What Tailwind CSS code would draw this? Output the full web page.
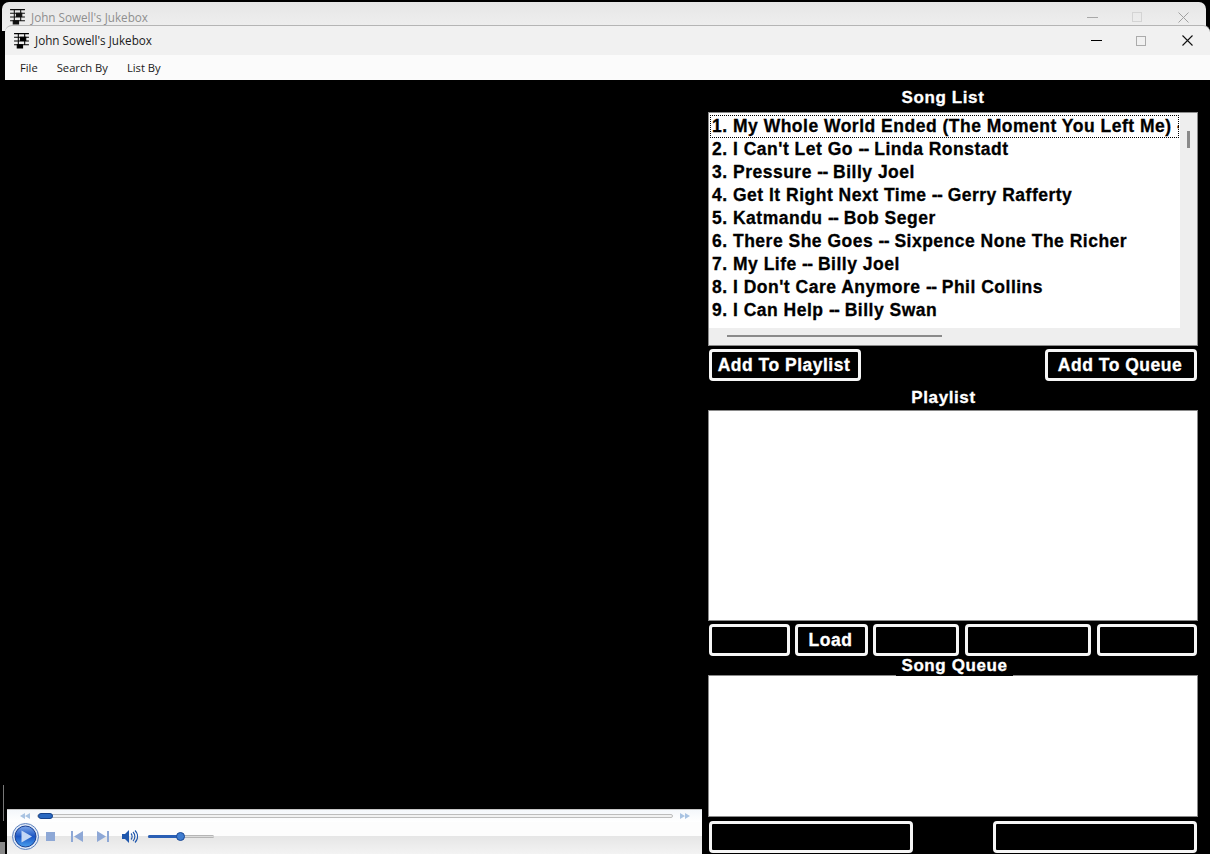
<!DOCTYPE html>
<html lang="en">
<head>
  <meta charset="UTF-8" />
  <title>John Sowell's Jukebox</title>
  <script src="https://cdn.jsdelivr.net/npm/@tailwindcss/browser@4"></script>
</head>
<body class="w-[1210px] h-[854px] overflow-hidden bg-black font-['Liberation_Sans',sans-serif]">

  <!-- window behind -->
  <div class="w-[1204px] h-[29px] ml-[2px] mt-[2px] bg-gradient-to-b from-[#e6e6e6] to-[#f0f0f0] rounded-t-[7px] flex items-start text-[#8f8f8f] font-['Open_Sans',sans-serif] text-[11.7px]">
    <svg class="w-[17px] h-[17px] ml-[7px] mt-[6px]" viewBox="0 0 16 16" fill="none" stroke="#111" stroke-width="1"><path d="M1 1.500h14M1 5h14M1 8.500h14M1 12h14M5 1v14M11 1v11"/><path d="M7 5h5v3H7zM4 12h5v3H4z" fill="#111"/></svg>
    <span class="ml-[5px] mt-[7px] leading-[16px]">John Sowell's Jukebox</span>
    <div class="ml-auto flex mt-[8px] mr-[17px] items-center h-[14px]">
      <div class="w-[11px] h-px bg-[#a8a8a8]"></div>
      <div class="w-[10px] h-[10px] border border-[#d4d4d4] ml-[34px]"></div>
      <svg class="w-[11px] h-[11px] ml-[36px]" viewBox="0 0 11 11" stroke="#a0a0a0" stroke-width="1"><path d="M0.500 0.500l10 10M10.500 0.500l-10 10"/></svg>
    </div>
  </div>

  <!-- scraps of the desktop at the left edge -->
  <div class="absolute left-[3px] top-[785px] w-px h-[36px] bg-[#777777]"></div>
  <div class="absolute left-0 top-[842px] w-[7px] h-[12px] bg-[#8a8a8a]"></div>

  <!-- front window -->
  <div class="absolute left-[5px] top-[25px] w-[1205px] h-[829px] flex flex-col">
    <div class="h-[30px] bg-[#f1f1f1] border-t border-[#b5b5b5] rounded-tl-[7px] rounded-tr-[7px] flex items-center text-[#1a1a1a] font-['Open_Sans',sans-serif] text-[11.7px]">
      <svg class="w-[17px] h-[17px] ml-[8px]" viewBox="0 0 16 16" fill="none" stroke="#000" stroke-width="1"><path d="M1 1.500h14M1 5h14M1 8.500h14M1 12h14M5 1v14M11 1v11"/><path d="M7 5h5v3H7zM4 12h5v3H4z" fill="#000"/></svg>
      <span class="ml-[5px]">John Sowell's Jukebox</span>
      <div class="ml-auto flex items-center mr-[17px]">
        <div class="w-[11px] h-px bg-black"></div>
        <div class="w-[10px] h-[10px] border border-[#ababab] ml-[34px]"></div>
        <svg class="w-[11px] h-[11px] ml-[36px]" viewBox="0 0 11 11" stroke="#111" stroke-width="1.100"><path d="M0.500 0.500l10 10M10.500 0.500l-10 10"/></svg>
      </div>
    </div>
    <div class="h-[25px] pt-px bg-[#fbfbfb] flex items-center gap-[19px] pl-[15px] text-[#1a1a1a] font-['Open_Sans',sans-serif] text-[11.2px]">
      <span>File</span><span>Search By</span><span>List By</span>
    </div>

    <div class="flex-1 flex bg-black min-h-0">
      <!-- video area and player -->
      <div class="w-[703px] flex flex-col justify-end">
        <div class="ml-[2px] mr-[6px] w-[695px] h-[45px] flex flex-col bg-white border-t border-[#c8c8c8]">
          <div class="h-[12px] flex items-center pl-[13px] pr-[12px] bg-gradient-to-b from-[#f4f7fb] to-white">
            <svg class="w-[10px] h-[6px]" viewBox="0 0 10 6" fill="#a9c3e2"><path d="M5 0v6L0 3zM10 0v6L5 3z"/></svg>
            <div class="relative flex-1 h-[4px] ml-[7px] mr-[7px] border border-[#bdbdbd] rounded-full bg-[#f2f2f2]">
              <div class="absolute left-0 -top-[2px] w-[15px] h-[6px] rounded-full bg-[#2a68c0] border border-[#16438c]"></div>
            </div>
            <svg class="w-[10px] h-[6px]" viewBox="0 0 10 6" fill="#a9c3e2"><path d="M0 0v6l5-3zM5 0v6l5-3z"/></svg>
          </div>
          <div class="flex-1 flex items-center pl-[5px] pb-[4px] bg-gradient-to-b from-[#fdfdfd] from-45% via-[#e6e6e6] via-45% to-[#f3f3f3]">
            <svg class="w-[27px] h-[27px]" viewBox="0 0 27 27">
              <defs><linearGradient id="playball" x1="0" y1="0" x2="0" y2="1"><stop offset="0" stop-color="#7ea8ea"/><stop offset="0.500" stop-color="#1b55c4"/><stop offset="1" stop-color="#4aa0ee"/></linearGradient></defs>
              <circle cx="13.500" cy="13.500" r="13" fill="#dfe8f6" stroke="#5d82bf"/>
              <circle cx="13.500" cy="13.500" r="10.500" fill="url(#playball)" stroke="#1a3f8f"/>
              <path d="M9.500 7.500v12l10.500-6z" fill="#c3d7f5"/>
            </svg>
            <div class="w-[9px] h-[9px] ml-[7px] bg-[#8ea8d6]"></div>
            <svg class="w-[12px] h-[11px] ml-[16px]" viewBox="0 0 12 11" fill="#8ea8d6"><path d="M0 0h2v11H0zM12 0v11L3 5.500z"/></svg>
            <svg class="w-[12px] h-[11px] ml-[14px]" viewBox="0 0 12 11" fill="#8ea8d6"><path d="M0 0v11l9-5.500zM10 0h2v11h-2z"/></svg>
            <svg class="w-[16px] h-[13px] ml-[13px]" viewBox="0 0 16 13" fill="none"><path d="M0 4h3l4-4v13L3 9H0z" fill="#1f57ad"/><path d="M9 3.500c1.500 1.500 1.500 4.500 0 6M11 2c2.500 2.500 2.500 6.500 0 9M13 0.500c3.500 3.500 3.500 8.500 0 12" stroke="#1f57ad" stroke-width="1.100"/></svg>
            <div class="relative w-[66px] h-[3px] ml-[10px] bg-[#dcdcdc] border-y border-[#b5b5b5] rounded-full">
              <div class="absolute left-0 -top-px w-[33px] h-[3px] bg-[#2a5fb5] rounded-full"></div>
              <div class="absolute left-[28px] -top-[4px] w-[9px] h-[9px] rounded-full bg-[#3f7ccf] border border-[#1c4a96]"></div>
            </div>
          </div>
        </div>
      </div>

      <!-- song panels -->
      <div class="w-[490px] relative">
        <h2 class="h-[32px] pt-[8px] pr-[20px] text-center text-white font-bold text-[17px] leading-[20px] tracking-[0.6px] [-webkit-text-stroke:0.3px_white]">Song List</h2>
        <div class="h-[234px] w-[490px] bg-[#eeeeee] border border-[#8a8a8a] flex flex-col overflow-hidden">
          <div class="flex flex-1 min-h-0">
            <ul class="w-[471px] h-[215px] bg-white overflow-hidden text-black font-bold text-[17.5px] leading-[23px] tracking-[0.5px] [-webkit-text-stroke:0.3px_black] pt-[2px] whitespace-nowrap">
              <li class="mx-px h-[23px] pl-[2px] outline-1 outline-dotted outline-black -outline-offset-1 overflow-hidden">1. My Whole World Ended (The Moment You Left Me) <span class="tracking-[-0.6px]">--</span></li>
              <li class="pl-[3px]">2. I Can't Let Go <span class="tracking-[-0.6px]">--</span> Linda Ronstadt</li>
              <li class="pl-[3px]">3. Pressure <span class="tracking-[-0.6px]">--</span> Billy Joel</li>
              <li class="pl-[3px]">4. Get It Right Next Time <span class="tracking-[-0.6px]">--</span> Gerry Rafferty</li>
              <li class="pl-[3px]">5. Katmandu <span class="tracking-[-0.6px]">--</span> Bob Seger</li>
              <li class="pl-[3px]">6. There She Goes <span class="tracking-[-0.6px]">--</span> Sixpence None The Richer</li>
              <li class="pl-[3px]">7. My Life <span class="tracking-[-0.6px]">--</span> Billy Joel</li>
              <li class="pl-[3px]">8. I Don't Care Anymore <span class="tracking-[-0.6px]">--</span> Phil Collins</li>
              <li class="pl-[3px]">9. I Can Help <span class="tracking-[-0.6px]">--</span> Billy Swan</li>
            </ul>
            <div class="flex-1 pt-[18px] pl-[7px]"><div class="w-[3px] h-[17px] bg-[#8a8a8a]"></div></div>
          </div>
          <div class="h-[17px] pt-[7px] pl-[18px]"><div class="w-[215px] h-[2px] bg-[#8a8a8a]"></div></div>
        </div>

        <div class="flex justify-between pl-px w-[489px] mt-[3px]">
          <button class="w-[152px] h-[32px] pr-[2px] border-[3px] border-[#f6f6f6] rounded-[4px] text-white font-bold text-[17.5px] tracking-[0.5px] [-webkit-text-stroke:0.3px_white]">Add To Playlist</button>
          <button class="w-[152px] h-[32px] pr-[2px] border-[3px] border-[#f6f6f6] rounded-[4px] text-white font-bold text-[17.5px] tracking-[0.5px] [-webkit-text-stroke:0.3px_white]">Add To Queue</button>
        </div>

        <h2 class="h-[29px] pt-[7px] pr-[19px] text-center text-white font-bold text-[17px] leading-[20px] tracking-[0.6px] [-webkit-text-stroke:0.3px_white]">Playlist</h2>
        <div class="h-[211px] w-[490px] bg-white border border-[#8a8a8a]"></div>

        <div class="flex mt-[3px] ml-px w-[488px] h-[32px] text-white font-bold text-[17.5px] tracking-[0.5px] [-webkit-text-stroke:0.3px_white]">
          <button class="w-[81px] border-[3px] border-[#f6f6f6] rounded-[4px]"></button>
          <button class="w-[73px] ml-[5px] pr-[2px] border-[3px] border-[#f6f6f6] rounded-[4px]">Load</button>
          <button class="w-[86px] ml-[5px] border-[3px] border-[#f6f6f6] rounded-[4px]"></button>
          <button class="w-[126px] ml-[6px] border-[3px] border-[#f6f6f6] rounded-[4px]"></button>
          <button class="w-[100px] ml-[6px] border-[3px] border-[#f6f6f6] rounded-[4px]"></button>
        </div>

        <h2 class="relative z-10 w-[117px] h-[20px] ml-[188px] bg-black text-center text-white font-bold text-[17px] leading-[19px] tracking-[0.6px] [-webkit-text-stroke:0.3px_white]">Song Queue</h2>
        <div class="h-[142px] w-[490px] -mt-px bg-white border border-[#8a8a8a]"></div>

        <div class="flex justify-between mt-[4px] ml-px w-[488px] h-[32px]">
          <button class="w-[204px] border-[3px] border-[#f6f6f6] rounded-[4px]"></button>
          <button class="w-[204px] border-[3px] border-[#f6f6f6] rounded-[4px]"></button>
        </div>
      </div>
    </div>
  </div>
</body>
</html>
